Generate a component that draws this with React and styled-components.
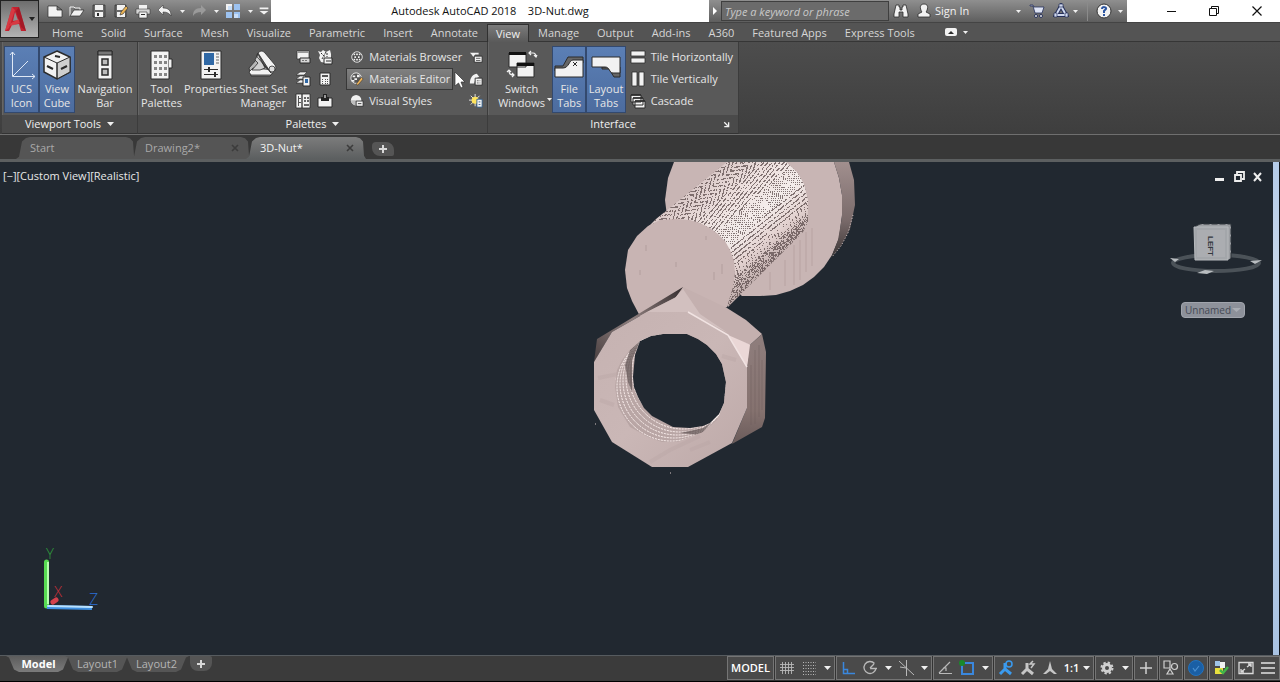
import React from 'react';
import styled, { createGlobalStyle, css } from 'styled-components';

const GlobalStyle = createGlobalStyle`
  * {
    box-sizing: border-box;
  }

  html, body, #root {
    height: 100%;
    margin: 0;
  }

  body {
    background: #212830;
    font-family: "Open Sans", "Noto Sans", sans-serif;
    font-size: 11px;
    line-height: 14px;
    color: #e6e6e6;
    overflow: hidden;
  }

  button, input {
    margin: 0;
    padding: 0;
    border: 0;
    background: none;
    font: inherit;
    color: inherit;
    white-space: nowrap;
  }

  svg {
    display: block;
    flex: none;
  }
`;

/* ---------- icons ---------- */

const W = '#f2f2f2';
const K = '#2b2b2b';

const glyphs = {
  newFile: <path d="M1 3h9l5 4v7H1z M10 3v4h5" fill={W} stroke={K} strokeWidth=".7" />,
  open: (
    <>
      <path d="M1 13V4h4l1 1h5v3" fill="#777" stroke={W} />
      <path d="M1 13l4-6h10l-4 6z" fill={W} stroke={K} strokeWidth=".7" />
    </>
  ),
  save: (
    <>
      <path d="M2 2h12v12H2z" fill="#6a6a6a" stroke={K} strokeWidth=".7" />
      <path d="M4 2h8v5H4zM4 9h8v5H4z" fill={W} />
      <path d="M6 10h2v3H6z" fill={K} />
    </>
  ),
  saveAs: (
    <>
      <path d="M2 2h11v12H2z" fill="#6a6a6a" stroke={K} strokeWidth=".7" />
      <path d="M4 2h8v5H4zM4 9h8v5H4z" fill={W} />
      <path d="M7 12l1-3 5-6 2 2-5 6z" fill="#e9b254" stroke={K} strokeWidth=".6" />
    </>
  ),
  print: (
    <>
      <path d="M4 2h8v4H4z" fill={W} />
      <path d="M1 6h14v5H1z" fill="#d4d4d4" stroke={K} strokeWidth=".5" />
      <path d="M4 9h8v6H4z" fill={W} stroke={K} strokeWidth=".6" />
      <path d="M6 11.500h4" stroke={K} />
    </>
  ),
  undo: <path d="M1 7l5-5v3c6 0 8 3 8 8-2-3-4-4-8-4v3z" fill={W} stroke={K} strokeWidth=".5" />,
  redo: <path d="M15 7l-5-5v3c-6 0-8 3-8 8 2-3 4-4 8-4v3z" fill="#9a9a9a" />,
  views: (
    <>
      <path d="M1 1h6v6H1z" fill={W} />
      <path d="M9 1h6v6H9zM1 9h6v6H1zM9 9h6v6H9z" fill="#9cc2f0" />
      <path d="M3 3h4v4H3zM9 11h4v4H9z" fill="#c9def7" />
    </>
  ),
  more: <path d="M3 4h10v2H3zM3 8h10l-5 4z" fill={W} />,
  binoculars: (
    <path d="M3 2h3v2h1v3h2V4h1V2h3l2 9v3h-5V9H6v5H1v-3z" fill={W} stroke={K} strokeWidth=".8" />
  ),
  person: (
    <path d="M8 1c6 0 3 7 2 8l4 2v3H2v-3l4-2C5 8 2 1 8 1z" fill={W} stroke={K} strokeWidth=".8" />
  ),
  cart: (
    <>
      <path d="M1 2h3l1 2h10l-2 6H6L4 3H1z" fill="#dde3f4" stroke="#26305a" strokeWidth=".8" />
      <circle cx="7" cy="13" r="1.500" fill={W} stroke="#26305a" />
      <circle cx="12" cy="13" r="1.500" fill={W} stroke="#26305a" />
    </>
  ),
  a360: (
    <>
      <path d="M8 3l5 9H3z" fill="none" stroke="#26305a" strokeWidth="4" />
      <path d="M8 3l5 9H3z" fill="none" stroke="#cfd8ee" strokeWidth="2" />
      <path d="M6 1h4v3H6zM1 10h3v4H1zM12 10h3v4h-3z" fill="#cfd8ee" stroke="#26305a" strokeWidth=".7" />
    </>
  ),
  help: (
    <>
      <circle cx="8" cy="8" r="7" fill={W} stroke="#333" />
      <path d="M6 6c0-3 5-2 4 0L8 8v2M8 11v2" fill="none" stroke="#2c55a0" strokeWidth="2" />
    </>
  ),
  minimize: <path d="M4 8.500h9" stroke="#111" />,
  restore: <path d="M3.500 5.500h7v7h-7zM5.500 5V3.500h7v7H11" fill="none" stroke="#111" />,
  close: <path d="M3.500 3.500l9 9M12.500 3.500l-9 9" stroke="#111" strokeWidth="1.200" />,

  ucs: (
    <g fill="none" stroke="#dfe8f5">
      <path d="M6.500 3v24.500H29M7 27L22 12" />
      <path d="M4 6l2.500-3L9 6M26 25l3 2.500-3 2.500" />
    </g>
  ),
  cube: (
    <g stroke={K}>
      <path d="M16 2l13 6v15l-13 7-13-7V8z" fill={W} strokeWidth="1.500" />
      <path d="M16 14l13-6v15l-13 7z" fill="#cfcfcf" />
      <path d="M3 8l13 6v16" fill="none" />
      <path d="M6 17l6 3M20 20l6-3M14 7l5 1" strokeWidth="2" />
    </g>
  ),
  navbar: (
    <g stroke={K}>
      <path d="M9 2h14v28H9z" fill={W} />
      <path d="M9 2h14v4H9z" fill="#777" />
      <path d="M13 10h6v6h-6zM13 20h6v6h-6z" fill="#bcbcbc" strokeWidth="1.500" />
    </g>
  ),
  toolPalettes: (
    <g>
      <path d="M6 2h18v28H6z" fill={W} stroke={K} />
      <path d="M24 10h3v9h-3" fill={W} stroke={K} />
      <path d="M9 6h3v3H9zM14 6h3v3h-3zM19 6h3v3h-3zM9 12h3v3H9zM14 12h3v3h-3zM19 12h3v3h-3zM9 18h3v3H9zM14 18h3v3h-3zM19 18h3v3h-3zM9 24h3v3H9zM14 24h3v3h-3zM19 24h3v3h-3z" fill="#858585" />
    </g>
  ),
  properties: (
    <g>
      <path d="M6 2h20v28H6z" fill={W} stroke={K} />
      <path d="M9 4h10v12H9z" fill="#2f68a5" />
      <path d="M21 5h3M21 8h3M21 11h3M21 14h3" stroke="#666" />
      <path d="M9 20.500h14M9 25.500h14" stroke={K} />
      <path d="M13 18h2v5h-2zM19 23h2v5h-2z" fill={K} />
    </g>
  ),
  sheetSet: (
    <g stroke={K} strokeWidth=".8" strokeLinejoin="round">
      <path d="M2 19l7-8 17 13-3 3H4z" fill="#b5b5b5" />
      <path d="M2 23l2 3h20l4-5-22-2z" fill={W} />
      <path d="M11 5l-3 6 3 3-6 7h8l5-2z" fill="#d0d0d0" />
      <path d="M11 4c3-3 5-2 7 0l10 12c2 3 0 8-4 8z" fill={W} />
      <path d="M11 4c-2 3-1 4 1 6l12 14" fill="none" />
      <circle cx="25" cy="20" r="3" fill="#dcdcdc" />
    </g>
  ),
  switchWindows: (
    <g>
      <path d="M3 4h17v14H3zM11 14h17v14H11z" fill={W} stroke={K} />
      <path d="M3 3h17v3H3zM11 14h17v3H11z" fill="#111" />
      <path d="M23 4h4c2 0 3 1 3 4M25 2l-2 2 2 2M28 6l2 2 1-2M3 21c0 4 1 5 5 5M6 24l2 2-2 2M1 23l2-2 2 2" fill="none" stroke={W} strokeWidth="1.200" />
    </g>
  ),
  fileTabs: (
    <g>
      <path d="M2 17h8l5-9h15v6h-6l-5 8H2z" fill="#666" stroke={K} />
      <path d="M2 19h8c6 0 6-8 10-8h10v17H2z" fill={W} stroke={K} />
      <path d="M20 13l4 4M24 13l-4 4" stroke={K} />
    </g>
  ),
  layoutTabs: (
    <g>
      <path d="M12 20h7l5 8h6V18H12z" fill="#666" stroke={K} />
      <path d="M2 8h28v16h-7c-4 0-3-6-8-6H2z" fill={W} stroke={K} />
    </g>
  ),

  command: (
    <>
      <path d="M2 2h12v8H2z" fill={W} stroke={K} strokeWidth=".7" />
      <path d="M2 2h12v2H2z" fill="#999" />
      <path d="M5 9h10v5H5z" fill="#d8d8d8" stroke={K} />
      <path d="M7 11.500h6" stroke="#777" strokeDasharray="2 1" />
    </>
  ),
  markup: (
    <>
      <path d="M1 2l3 1 2-2 3 2 4-2 1 4v5l-3 2-2 2-5-1-2-4 1-3z" fill={W} />
      <path d="M4 4l4 4M9 3l-4 7M10 4v4" stroke={K} strokeDasharray="2 1" />
      <path d="M7 9h8v6H7z" fill={W} stroke={K} />
      <path d="M9 12h5" stroke={K} />
    </>
  ),
  layers: (
    <>
      <path d="M1 12l4-3h6l-3 3zM1 8l4-3h6l-3 3zM1 4l4-3h7L9 4z" fill={W} stroke={K} strokeWidth=".6" />
      <path d="M8 6h7v9H8z" fill={W} stroke={K} />
      <path d="M10 8h3v4h-3z" fill="#2f68a5" />
    </>
  ),
  calculator: (
    <>
      <path d="M3 2h10v12H3z" fill={W} stroke={K} />
      <path d="M5 4h6v2H5zM5 8h1v1H5zM8 8h1v1H8zM10 8h1v1h-1zM5 10h1v1H5zM8 10h1v1H8zM10 10h1v1h-1zM5 12h1v1H5zM8 12h1v1H8zM10 12h1v1h-1z" fill="#555" />
    </>
  ),
  design: (
    <>
      <path d="M1 1h6v14H1zM7 1h8v14H7z" fill={W} stroke={K} strokeWidth=".8" />
      <path d="M3.500 3v10M3 5.500h3M3 9.500h3" stroke="#555" />
      <path d="M9 4h2v2H9zM12 4h2v2h-2zM9 7h2v2H9zM12 7h2v2h-2zM9 11h5v2H9z" fill="#666" />
    </>
  ),
  xref: (
    <>
      <path d="M1 5h14v9H1z" fill={W} stroke={K} />
      <path d="M4 4h8v4H4z" fill="#222" />
      <path d="M6 1h4v4H6z" fill="#222" />
      <path d="M7 2h2v3H7z" fill="#999" />
    </>
  ),
  browser: (
    <>
      <circle cx="8" cy="8" r="6" fill="#444" stroke={W} />
      <path d="M4 4h2v2H4zM7 4h2v2H7zM10 4h2v2h-2zM5 7h2v2H5zM9 7h2v2H9zM4 10h2v2H4zM7 10h2v2H7zM10 10h2v2h-2z" fill={W} />
    </>
  ),
  editor: (
    <>
      <circle cx="7" cy="7" r="6" fill="#555" stroke={W} />
      <path d="M3 4h3v2H3zM8 3h3v3H8zM5 7h3v2H5zM2 9h3v2H2z" fill={W} />
      <path d="M7 14l6-8 2 2-6 7z" fill="#f1b55a" stroke={K} strokeWidth=".6" />
    </>
  ),
  visual: (
    <>
      <circle cx="7" cy="7" r="6" fill={W} />
      <path d="M7 1v6H1a6 6 0 0 0 6 6z" fill="#bdbdbd" />
      <path d="M7 8h8v6H7z" fill={W} stroke={K} />
      <path d="M9 11h4" stroke={K} />
    </>
  ),
  lightList: (
    <>
      <path d="M1 3h10v2H7L5 8 3 5z" fill={W} />
      <path d="M6 7h9v7H6z" fill={W} stroke={K} />
      <path d="M8 9.500h5M8 12h5" stroke="#555" />
    </>
  ),
  camera: (
    <>
      <path d="M1 13c0-7 4-11 8-11l3 4c-4 0-5 3-6 7z" fill={W} />
      <path d="M7 7h8v8H7z" fill={W} stroke={K} />
      <path d="M9 10h4M9 12.500h4" stroke="#555" strokeDasharray="2 1" />
    </>
  ),
  sun: (
    <>
      <path d="M7 0v14M0 7h14M2 2l10 10M12 2L2 12" stroke={W} />
      <circle cx="7" cy="7" r="4" fill="#ffe45c" />
      <path d="M9 6h6v9H9z" fill={W} stroke="#2f5b8c" />
      <path d="M11 9h2M11 12h2" stroke="#2f5b8c" />
    </>
  ),
  tileH: <path d="M1 2h14v5H1zM1 9h14v5H1z" fill={W} stroke={K} strokeWidth=".8" />,
  tileV: <path d="M2 1h5v14H2zM9 1h5v14H9z" fill={W} stroke={K} strokeWidth=".8" />,
  cascade: (
    <g fill={W} stroke={K}>
      <path d="M1 2h10v7H1zM3 5h10v7H3zM5 8h10v7H5z" />
      <path d="M1 2h10M3 5h10M5 8h10" strokeWidth="1.500" />
    </g>
  ),
  launcher: <path d="M6 6l4 4M11 6v5H6" fill="none" stroke={W} strokeWidth="1.500" />,
  ribbonToggle: (
    <>
      <rect x="2" y="4" width="12" height="8" rx="2" fill={W} />
      <path d="M5 10l3-3 3 3z" fill={K} />
    </>
  ),

  grid: <path d="M3.500 2v12M6.500 2v12M9.500 2v12M12.500 2v12M1 4.500h14M1 7.500h14M1 10.500h14" stroke="#b9b9b9" strokeWidth=".9" />,
  snap: <path d="M2 2.500h13M2 5.500h13M2 8.500h13M2 11.500h13M2 14.500h13" stroke="#b9b9b9" strokeDasharray="1 1.500" />,
  ortho: <path d="M3.500 2v11.500H15M4 9.500h3.500V13" fill="none" stroke="#3a87dd" strokeWidth="1.500" />,
  polar: <path d="M12.500 3.500A6 6 0 1 0 14 8M8 8.500h7M8 8l4-4" fill="none" stroke="#b9b9b9" strokeWidth="1.300" />,
  iso: <path d="M8.500 0v16M1 1l15 14M2 7l6 1" stroke="#b9b9b9" />,
  track: <path d="M2 13.500h13M2 13L13 2M6 8h3v3" fill="none" stroke="#b9b9b9" strokeWidth="1.200" />,
  osnap: (
    <>
      <path d="M3 3h11v11H3z" fill="none" stroke="#3a87dd" strokeWidth="2" />
      <circle cx="3" cy="3" r="3" fill="#19892a" />
    </>
  ),
  annoOn: (
    <g fill="none" stroke="#3a9bf0">
      <path d="M7 3v7M7 9l-5 5M7 9l6 5" strokeWidth="3" />
      <circle cx="11" cy="4" r="3" strokeWidth="1.500" />
    </g>
  ),
  annoAuto: (
    <g fill="none" stroke="#c6c6c6">
      <path d="M7 3v7M7 9l-5 5M7 9l6 5" strokeWidth="3" />
      <path d="M13 1l-3 3h4l-3 4" strokeWidth="1.500" />
    </g>
  ),
  anno: <path d="M8 1l2 8 5 5h-3l-4-3-4 3H1l5-5z" fill="#c6c6c6" />,
  gear: (
    <>
      <circle cx="8" cy="8" r="3.500" fill="none" stroke="#d0d0d0" strokeWidth="3" />
      <circle cx="8" cy="8" r="5.500" fill="none" stroke="#d0d0d0" strokeWidth="2" strokeDasharray="2.320 2" />
    </>
  ),
  plus: <path d="M8 2v12M2 8h12" stroke="#d0d0d0" strokeWidth="1.500" />,
  isolate: (
    <g fill="#4a4a4a" stroke="#d0d0d0" strokeWidth="1.200">
      <path d="M1 1h6v7H1z" />
      <circle cx="11.500" cy="6.500" r="3" />
      <path d="M7 9l3 5H4z" />
    </g>
  ),
  hardware: (
    <>
      <circle cx="8" cy="8" r="7.500" fill="#1a5fa5" stroke="#2272be" />
      <path d="M5 8l2 3 4-5" fill="none" stroke="#4b8fd0" strokeWidth="1.200" />
    </>
  ),
  trusted: (
    <>
      <path d="M2 1h5v5H2z" fill="#9fc5e8" />
      <path d="M7 2h5v6H7z" fill={W} />
      <path d="M2 8h8v6H2z" fill="#e8df3e" />
      <path d="M7 10l3 3 5-6" fill="none" stroke="#43b649" strokeWidth="2.500" />
    </>
  ),
  clean: (
    <g fill="none" stroke="#dadada" strokeWidth="1.300">
      <path d="M1 2.500h14v11H1z" />
      <path d="M9 7l4-3M10 4h3v3M7 9l-4 3M3 9v3h3" />
    </g>
  ),
  menu: <path d="M1 3h14M1 8h14M1 13h14" stroke="#e2e2e2" strokeWidth="1.600" />,
};

const Icon = ({ name, size = 16, box = 16 }) => (
  <svg width={size} height={size} viewBox={`0 0 ${box} ${box}`} aria-hidden="true">
    {glyphs[name]}
  </svg>
);

const Caret = () => (
  <svg width="7" height="4" viewBox="0 0 7 4" aria-hidden="true">
    <path d="M0 0h7L3.500 4z" fill="#f0f0f0" />
  </svg>
);

const TinyCaret = () => (
  <svg width="5" height="3" viewBox="0 0 5 3" aria-hidden="true">
    <path d="M0 0h5L2.500 3z" fill="#f0f0f0" />
  </svg>
);

const Cross = () => (
  <svg width="8" height="14" viewBox="0 0 8 14" aria-hidden="true">
    <path d="M1 4l6 6M7 4l-6 6" stroke="#3c3c3c" strokeWidth="1.600" />
  </svg>
);

const PlusMark = () => (
  <svg width="8" height="8" viewBox="0 0 8 8" aria-hidden="true">
    <path d="M4 0v8M0 4h8" stroke="#d8d8d8" strokeWidth="2" />
  </svg>
);

/* ---------- layout ---------- */

const Shell = styled.div`
  display: flex;
  flex-direction: column;
  height: 100vh;
  background: #3b3b3b;
  border-bottom: 1px solid #000;
`;

const Header = styled.header`
  display: grid;
  grid-template-columns: 39px 1fr;
  grid-template-rows: 23px 18px;
  background: #545454;
  border-bottom: 1px solid #363636;
`;

const AppButton = styled.button`
  grid-row: 1 / 3;
  height: 38px;
  display: flex;
  align-items: center;
  padding-left: 3px;
  gap: 2px;
  background: linear-gradient(#6d6d6d, #b3b3b3);
  border: 1px solid #222;
`;

const TitleBar = styled.div`
  display: flex;
  background: #fff;
  border-bottom: 1px solid #444;
`;

const QuickAccess = styled.div`
  display: flex;
  align-items: center;
  padding: 0 0 0 5px;
  background: linear-gradient(#8f8f8f, #5e5e5e);
`;

const ToolButton = styled.button`
  display: flex;
  align-items: center;
  justify-content: center;
  align-self: ${props => props.$low ? 'flex-end' : 'auto'};
  width: ${props => props.$w || 22}px;
  height: ${props => props.$h || 22}px;
`;

const Title = styled.h1`
  flex: 1;
  margin: 0;
  font-size: 11px;
  font-weight: 400;
  line-height: 22px;
  text-align: center;
  white-space: pre;
  color: #111;
`;

const InfoCenter = styled.div`
  display: flex;
  align-items: center;
  width: 418px;
  background: linear-gradient(#8f8f8f, #5e5e5e);
`;

const SearchBox = styled.input`
  width: 168px;
  height: 20px;
  padding: 0 3px;
  background: #6b6b6b;
  border: 1px solid #3f3f3f;
  font-style: italic;
  outline: none;

  &::placeholder {
    color: #c9c9c9;
    opacity: 1;
  }
`;

const SignIn = styled.button`
  display: flex;
  align-items: center;
  justify-content: space-between;
  width: 86px;
  height: 22px;
  color: #f2f2f2;
`;

const Divider = styled.span`
  width: 1px;
  height: 20px;
  margin: 0 6px;
  background: #8b8b8b;
`;

const WindowControls = styled.div`
  display: flex;
  justify-content: space-between;
  width: 153px;
  padding: 0 12px 0 33px;
`;

const Menu = styled.nav`
  display: flex;
  align-items: flex-end;
  padding-left: 4px;
`;

const MenuTab = styled.button`
  height: 18px;
  padding: 0 8px;
  border: 1px solid transparent;
  border-bottom: 0;
  color: #d6d6d6;

  ${props => props.$active && css`
    margin-bottom: -1px;
    border-color: #303030;
    color: #f0f0f0;
    background: linear-gradient(#7b7b7b, #5a5a5a);
  `}
`;

const RibbonToggle = styled.button`
  display: flex;
  align-items: center;
  gap: 4px;
  margin-left: 19px;
  height: 18px;
`;

const Ribbon = styled.section`
  position: relative;
  display: flex;
  height: 93px;
  padding-left: 2px;
  background: linear-gradient(#4d4d4d, #3e3e3e);
  border-bottom: 1px solid #6f6f6f;
`;

const Panel = styled.div`
  display: flex;
  flex-direction: column;
  width: ${props => props.$w}px;
  background: #595959;
  border-right: 1px solid #3c3c3c;
  border-bottom: 1px solid #333;
  box-shadow: inset 1px 0 0 #666;
`;

const PanelBody = styled.div`
  display: flex;
  flex: 1;
  padding: ${props => props.$wide ? '4px 2px 0 9px' : '4px 2px 0'};
`;

const PanelTitle = styled.button`
  display: flex;
  align-items: center;
  justify-content: center;
  gap: 6px;
  height: 18px;
  background: #4a4a4a;
  color: #f0f0f0;
`;

const InterfaceFooter = styled.div`
  display: grid;
  grid-template-columns: 24px 1fr 16px;
  align-items: center;
  height: 18px;
  padding-right: 8px;
  padding-left: 0;
  background: #4a4a4a;
  color: #f0f0f0;
  text-align: center;
`;

const LargeButton = styled.button`
  display: flex;
  flex-direction: column;
  align-items: center;
  width: ${props => props.$w}px;
  height: 67px;
  padding-top: 2px;
  gap: 1px;
  white-space: pre;
  border: 1px solid transparent;

  ${props => props.$active && css`
    background: linear-gradient(#5b7fb5, #4c6c9f);
    border-color: #33496e;
  `}
`;

const IconGrid = styled.div`
  display: grid;
  grid-template-columns: 22px 22px;
  grid-template-rows: repeat(3, 22px);
  padding-left: 4px;
`;

const Stack = styled.div`
  display: flex;
  flex-direction: column;
  align-items: flex-start;
`;

const PanelDivider = styled.span`
  width: 1px;
  height: 67px;
  margin: 0 6px 0 4px;
  background: #7a7a7a;
`;

const SmallButton = styled.button`
  display: flex;
  align-items: center;
  gap: 5px;
  height: 22px;
  padding: 0 2px 0 3px;
  border: 1px solid transparent;

  ${props => props.$hover && css`
    background: linear-gradient(#808080, #686868);
    border-color: #383838;
  `}
`;

const Pointer = styled.svg`
  position: absolute;
  left: 454px;
  top: 29px;
`;

const FileTabs = styled.div`
  display: flex;
  align-items: flex-end;
  height: 27px;
  padding-left: 16px;
  background: #383838;
  border-bottom: 3px solid #5c5f60;
`;

const FileTab = styled.div`
  display: flex;
  align-items: center;
  justify-content: space-between;
  width: 120px;
  height: 22px;
  margin-right: -5px;
  padding: 0 12px 0 14px;
  color: ${props => props.$active ? '#f2f2f2' : '#a9a9a9'};
  background: ${props => props.$active ? 'linear-gradient(#7c7c7c, #5c5f60)' : '#555'};
  clip-path: polygon(0 100%, 3px 90%, 6px 20%, 10px 4%, 14px 0, calc(100% - 10px) 0, calc(100% - 6px) 6%, calc(100% - 3px) 20%, calc(100% - 2px) 85%, 100% 100%);
`;

const TabClose = styled.button`
  width: 8px;
  height: 14px;
`;

const AddTab = styled.button`
  display: flex;
  align-items: center;
  justify-content: center;
  width: 22px;
  height: ${props => props.$bottom ? 15 : 14}px;
  margin: ${props => props.$bottom ? '0 0 0 7px' : '0 0 3px 11px'};
  background: #555;
  border-radius: ${props => props.$bottom ? '0 2px 8px 8px' : '4px 8px 2px 8px'};
`;

const Viewport = styled.main`
  position: relative;
  flex: 1;
  min-height: 0;
  overflow: hidden;
  background: #212830;
  border-right: 1px solid #10151a;
`;

const ViewportBar = styled.div`
  display: flex;
  justify-content: space-between;
  padding: 6px 13px 0 3px;
`;

const ViewportControls = styled.div`
  display: flex;
`;

const ViewControl = styled.button`
  display: block;
  width: ${props => props.$w ? `${props.$w}px` : 'auto'};
  color: #e8e8e8;
`;

const BackWindow = styled.div`
  position: absolute;
  top: 0;
  right: 0;
  bottom: 0;
  width: 6px;
  background: linear-gradient(#b4cbe8, #c6d6ea 20%, #a9c3e3);
`;

const Model = styled.svg`
  position: absolute;
  left: 580px;
  top: 0;
`;

const UcsTriad = styled.svg`
  position: absolute;
  left: 36px;
  bottom: 40px;
`;

const ViewCube = styled.div`
  position: absolute;
  top: 54px;
  right: 15px;
  display: flex;
  flex-direction: column;
  align-items: center;
  gap: 18px;
`;

const WcsMenu = styled.button`
  display: flex;
  align-items: center;
  justify-content: space-between;
  width: 64px;
  height: 16px;
  margin-right: 6px;
  padding: 0 3px;
  font-size: 10px;
  color: #454a55;
  background: #8d919a;
  border: 1px solid #a1a5ad;
  border-radius: 4px;
`;

const Footer = styled.footer`
  display: flex;
  justify-content: space-between;
  height: 26px;
  background: #3b3b3b;
  border-top: 1px solid #565b5f;
`;

const LayoutTabs = styled.div`
  display: flex;
  padding-left: 6px;
`;

const LayoutTab = styled.button`
  width: 65px;
  height: 16px;
  margin-right: -6px;
  color: ${props => props.$active ? '#fff' : '#b4b4b4'};
  font-weight: ${props => props.$active ? 700 : 400};
  background: ${props => props.$active ? 'linear-gradient(#5c5c5c, #7b7b7b)' : '#555'};
  clip-path: polygon(0 0, 3px 10%, 8px 85%, 13px 100%, calc(100% - 13px) 100%, calc(100% - 8px) 85%, calc(100% - 3px) 10%, 100% 0);
`;

const StatusBar = styled.div`
  display: flex;
  background: #333;
  gap: 1px;
`;

const StatusGroup = styled.div`
  display: flex;
  align-items: center;
  height: 24px;
  background: #4a4a4a;
  border: 1px solid #757575;
`;

const StatusButton = styled.button`
  display: flex;
  align-items: center;
  justify-content: center;
  gap: 4px;
  width: ${props => props.$w || 22}px;
  height: 22px;
  color: #fff;
  font-weight: 600;
`;

/* ---------- 3D model ---------- */

// Pixel moire of the thread, v runs across the shaft and u along it
const threadPath = () => {
  let d = '';
  for (let y = 162; y < 310; y += 1) {
    for (let x = 640; x < 812; x += 1) {
      const v = (x - 648) * 0.66 + (y - 227) * 0.75;
      const u = (x - 648) * 0.75 - (y - 227) * 0.66;
      const noise = Math.abs(Math.sin(x * 12.9898 + y * 78.233) * 43758.5453) % 1;
      let dark = false;
      if (v < 26) {
        const fold = Math.abs(((v + 2) % 14) - 7);
        dark = Math.sin((u + fold * 1.5) * 1.05) > 0.25 && noise > 0.3;
      } else if (v < 48) {
        dark = Math.sin((v + u * 0.16) * 2) > 0.35 && noise > 0.3;
      } else if (v < 68) {
        dark = Math.sin(v * 2.3) * Math.sin(u * 1.9) > 0.3 && noise > 0.25;
      } else if (v < 86) {
        dark = Math.sin((v - u * 0.05) * 1.7) > 0.4 && noise > 0.3;
      } else if (v < 95) {
        dark = (u < 38 || noise > 0.6) && Math.sin((u + v * 0.5) * 1.6) > 0.2;
      } else {
        dark = noise > 0.5;
      }
      if (dark) d += `M${x} ${y}h1v1h-1z`;
    }
  }
  return d;
};

const thread = threadPath();

const boreRings = [0, 3, 6, 9, 12, 15];

const NutAndBolt = () => (
  <Model width="300" height="320" viewBox="580 162 300 320" role="img" aria-label="Hex nut and bolt">
    <defs>
      <linearGradient id="face" x1="0" y1="0" x2="1" y2="1">
        <stop offset="0" stopColor="#c5b2b1" />
        <stop offset=".5" stopColor="#cab7b6" />
        <stop offset="1" stopColor="#bda9a8" />
      </linearGradient>
      <linearGradient id="rim" x1="0" y1="0" x2="0" y2="1">
        <stop offset="0" stopColor="#a18f8e" />
        <stop offset=".6" stopColor="#7a6b6b" />
        <stop offset="1" stopColor="#3b3535" />
      </linearGradient>
      <linearGradient id="side" x1="0" y1="0" x2="0" y2="1">
        <stop offset="0" stopColor="#8f7e7d" />
        <stop offset=".7" stopColor="#85726f" />
        <stop offset="1" stopColor="#6a5b5a" />
      </linearGradient>
      <linearGradient id="shadowSide" x1="0" y1="1" x2="1" y2="0">
        <stop offset="0" stopColor="#493f40" />
        <stop offset=".5" stopColor="#8f7f7e" />
        <stop offset="1" stopColor="#332c2d" />
      </linearGradient>
      <linearGradient id="shaft" gradientUnits="userSpaceOnUse" x1="672" y1="190" x2="755" y2="285">
        <stop offset="0" stopColor="#d3c1c0" />
        <stop offset=".35" stopColor="#ecdfdd" />
        <stop offset=".6" stopColor="#f4edeb" />
        <stop offset=".8" stopColor="#e2d1cf" />
        <stop offset="1" stopColor="#b9a7a6" />
      </linearGradient>
      <clipPath id="shaftClip">
        <path d="M646 229L656 219L727 162H786L797 172L804 184L808 200V222L803 232L790 245L728 307L700 250z" />
      </clipPath>
      <clipPath id="boreClip">
        <path d="M640 341L651 336L663 334L687 334L698 339L707 345L716 354L722 364L726 382L724 403L717 420L703 432L677 442L662 442L648 437L630 427L618 407L615 387L617 370L622 360L630 350z" />
      </clipPath>
    </defs>

    <path d="M674 162L668 178L665 200L670 240L742 296L760 296L776 295L790 291L803 285L814 277L824 267L832 255L839 238L842 215L842 195L839 178L834 162z" fill="#c8b5b4" />
    <path d="M800 240v40M794 245v40M806 232v40M812 228v38M785 260v26M770 272v18" stroke="#c0acab" strokeWidth="2" />
    <path d="M834 162h15l5 18 1 25-5 24-9 17-10 12 7-18 4-23V195l-3-17z" fill="url(#rim)" />
    <path d="M853 215l-5 18-7 13-9 11" fill="none" stroke="#d8c8c7" strokeDasharray="1 2" />

    <g clipPath="url(#shaftClip)">
      <path d="M640 162h172v148H640z" fill="url(#shaft)" />
      <path d={thread} fill="#5d4e4e" opacity=".75" shapeRendering="crispEdges" />
    </g>

    <path d="M637 236L648 226L660 220L676 219L690 220L700 223L710 228L718 234L725 241L730 250L734 261L735 273L733 287L727 307L700 320H642L632 301L627 288L625 270L628 250z" fill="#c8b4b3" />
    <path d="M646 245v6M676 262v5M706 236v4M722 264v10M714 272v8M640 270v5" stroke="#bda9a8" strokeWidth="2" />

    <path d="M683 287L597 339L594 362L612 332L647 312L676 297z" fill="url(#shadowSide)" />
    <path d="M683 287L727 308L746 320L762 334L750 345L728 337L688 312z" fill="#c4b0af" />
    <path d="M675 298L683 289L700 314L728 333L688 312H647z" fill="#d2c0bf" />
    <path d="M728 335L751 345L747 370z" fill="#ead7d6" />
    <path d="M762 334L766 352L765 418L762 427L732 444L747 408V368L750 345z" fill="url(#side)" />
    <path d="M751 365v60M755 350v74M759 345v72M762 360v50" stroke="#6a5a59" strokeWidth="2" opacity=".2" />
    <path d="M647 312H688L728 335L747 367V408L732 443L688 467H652L612 442L594 410V362L612 332z" fill="url(#face)" />
    <path d="M688 312L728 335L747 367" fill="none" stroke="#f1e3e2" strokeWidth="1.500" />
    <path d="M598 378l20-4 10 4M600 400l14 5M650 462l20-12 30-14M690 450l20-8M722 356l14 4" fill="none" stroke="#b7a3a2" strokeWidth="4" opacity=".35" />

    <g clipPath="url(#boreClip)">
      <path d="M610 330h120v116H610z" fill="#b9a6a5" />
      {boreRings.map(r => (
        <ellipse key={r} cx={671 + r} cy={387 - r} rx="54" ry="54" fill="none" stroke="#fff3f1" strokeDasharray="2 1" />
      ))}
      <path d="M640 341L630 350L625 365L628 382L632 392L632 360z" fill="#5d5050" opacity=".7" />
      <path d="M680 433L703 428L712 422L700 435z" fill="#5d5050" opacity=".7" />
      <path d="M640 341L651 336L663 334L687 334L698 339L707 345L716 354L722 364L726 382L724 403L719 414L710 423L703 426L690 428L673 427L652 416L644 408L638 397L634 387L633 377L635 355z" fill="#212830" />
    </g>
    <path d="M615 379h1M670 473h1M595 424h1" stroke="#d9c9c8" />
  </Model>
);

/* ---------- data ---------- */

const quickTools = [
  ['newFile', 'New'], ['open', 'Open'], ['save', 'Save'], ['saveAs', 'Save As'], ['print', 'Plot'],
];

const menus = [
  'Home', 'Solid', 'Surface', 'Mesh', 'Visualize', 'Parametric', 'Insert', 'Annotate', 'View',
  'Manage', 'Output', 'Add-ins', 'A360', 'Featured Apps', 'Express Tools',
];

const paletteTools = [
  ['command', 'Command Line'], ['markup', 'Markup Set Manager'],
  ['layers', 'Layer Properties'], ['calculator', 'Quick Calculator'],
  ['design', 'Design Center'], ['xref', 'External References'],
];

const materialTools = [
  ['browser', 'Materials Browser'], ['editor', 'Materials Editor'], ['visual', 'Visual Styles'],
];

const lightTools = [
  ['lightList', 'Lights in Model'], ['camera', 'Advanced Render Settings'], ['sun', 'Sun Properties'],
];

const windowTools = [
  ['tileH', 'Tile Horizontally'], ['tileV', 'Tile Vertically'], ['cascade', 'Cascade'],
];

const Large = ({ icon, children, ...rest }) => (
  <LargeButton {...rest}>
    <Icon name={icon} size={32} box={32} />
    <span>{children}</span>
  </LargeButton>
);

const Drop = ({ label, ...rest }) => (
  <ToolButton $w={12} aria-label={label} {...rest}><TinyCaret /></ToolButton>
);

const Status = ({ icon, label }) => (
  <StatusButton aria-label={label}><Icon name={icon} /></StatusButton>
);

const StatusDrop = ({ label }) => (
  <StatusButton $w={14} aria-label={label}><Caret /></StatusButton>
);

const App = () => (
  <Shell>
    <GlobalStyle />
    <Header>
      <AppButton aria-label="Application menu">
        <svg width="23" height="26" viewBox="0 0 23 26">
          <path d="M8 1h7l7 24h-5l-2-7-7 1-3 6H1z" fill="#c3202e" />
          <path d="M11 6l3 8-5 1z" fill="#8f8f8f" />
          <path d="M8 1L1 25l4-3L11 4zM5 18l10-5 1 4-9 3z" fill="#e0454c" opacity=".7" />
          <path d="M12 5l5 16 5 4-7-24z" fill="#8f1420" opacity=".6" />
        </svg>
        <svg width="6" height="4" viewBox="0 0 6 4"><path d="M0 0h6L3 4z" fill="#222" /></svg>
      </AppButton>
      <TitleBar>
        <QuickAccess>
          {quickTools.map(([icon, label]) => (
            <ToolButton key={icon} aria-label={label}><Icon name={icon} /></ToolButton>
          ))}
          <ToolButton aria-label="Undo"><Icon name="undo" /></ToolButton>
          <Drop label="Undo history" />
          <ToolButton aria-label="Redo"><Icon name="redo" /></ToolButton>
          <Drop label="Redo history" />
          <ToolButton aria-label="Viewport configuration"><Icon name="views" /></ToolButton>
          <Drop label="Viewport list" />
          <ToolButton $w={15} aria-label="Customize"><Icon name="more" size={14} /></ToolButton>
        </QuickAccess>
        <Title>Autodesk AutoCAD 2018    3D-Nut.dwg</Title>
        <InfoCenter>
          <ToolButton $w={12} aria-label="Collapse search">
            <svg width="4" height="8" viewBox="0 0 4 8"><path d="M0 0v8l4-4z" fill="#fff" /></svg>
          </ToolButton>
          <SearchBox aria-label="Search" placeholder="Type a keyword or phrase" />
          <ToolButton $w={24} aria-label="Find"><Icon name="binoculars" /></ToolButton>
          <ToolButton aria-label="Account"><Icon name="person" /></ToolButton>
          <SignIn>Sign In<TinyCaret /></SignIn>
          <ToolButton $w={32} aria-label="App Store"><Icon name="cart" /></ToolButton>
          <ToolButton $w={16} aria-label="Stay Connected"><Icon name="a360" /></ToolButton>
          <Drop label="Connect menu" />
          <Divider />
          <ToolButton $w={20} aria-label="Help"><Icon name="help" /></ToolButton>
          <Drop label="Help menu" />
        </InfoCenter>
        <WindowControls>
          <ToolButton aria-label="Minimize"><Icon name="minimize" /></ToolButton>
          <ToolButton aria-label="Restore"><Icon name="restore" /></ToolButton>
          <ToolButton aria-label="Close"><Icon name="close" /></ToolButton>
        </WindowControls>
      </TitleBar>
      <Menu>
        {menus.map(name => (
          <MenuTab key={name} $active={name === 'View'}>{name}</MenuTab>
        ))}
        <RibbonToggle aria-label="Minimize ribbon">
          <Icon name="ribbonToggle" />
          <TinyCaret />
        </RibbonToggle>
      </Menu>
    </Header>

    <Ribbon>
      <Panel $w={136}>
        <PanelBody>
          <Large icon="ucs" $w={35} $active>{'UCS\nIcon'}</Large>
          <Large icon="cube" $w={36} $active>{'View\nCube'}</Large>
          <Large icon="navbar" $w={60}>{'Navigation\nBar'}</Large>
        </PanelBody>
        <PanelTitle>Viewport Tools <Caret /></PanelTitle>
      </Panel>
      <Panel $w={350}>
        <PanelBody>
          <Large icon="toolPalettes" $w={43}>{'Tool\nPalettes'}</Large>
          <Large icon="properties" $w={56}>Properties</Large>
          <Large icon="sheetSet" $w={52}>{'Sheet Set\nManager'}</Large>
          <IconGrid>
            {paletteTools.map(([icon, label]) => (
              <ToolButton key={icon} aria-label={label}><Icon name={icon} /></ToolButton>
            ))}
          </IconGrid>
          <PanelDivider />
          <Stack>
            {materialTools.map(([icon, label]) => (
              <SmallButton key={icon} $hover={icon === 'editor'}><Icon name={icon} size={14} />{label}</SmallButton>
            ))}
          </Stack>
          <Stack>
            {lightTools.map(([icon, label]) => (
              <ToolButton key={icon} aria-label={label}><Icon name={icon} size={14} /></ToolButton>
            ))}
          </Stack>
        </PanelBody>
        <PanelTitle>Palettes <Caret /></PanelTitle>
      </Panel>
      <Panel $w={251}>
        <PanelBody $wide>
          <Large icon="switchWindows" $w={50}>{'Switch\nWindows'}</Large>
          <Drop label="Window list" $w={6} $h={32} $low />
          <Large icon="fileTabs" $w={35} $active>{'File\nTabs'}</Large>
          <Large icon="layoutTabs" $w={40} $active>{'Layout\nTabs'}</Large>
          <Stack>
            {windowTools.map(([icon, label]) => (
              <SmallButton key={icon}><Icon name={icon} />{label}</SmallButton>
            ))}
          </Stack>
        </PanelBody>
        <InterfaceFooter>
          <span />
          Interface
          <ToolButton $w={24} $h={18} aria-label="Interface options"><Icon name="launcher" size={14} /></ToolButton>
        </InterfaceFooter>
      </Panel>
      <Pointer width="12" height="18" viewBox="0 0 12 18" aria-hidden="true">
        <path d="M1 1v14l3.500-3 2.500 5 2-1-2-5h4z" fill="#fff" stroke="#333" strokeWidth=".7" />
      </Pointer>
    </Ribbon>

    <FileTabs>
      <FileTab>Start</FileTab>
      <FileTab>Drawing2* <TabClose aria-label="Close Drawing2"><Cross /></TabClose></FileTab>
      <FileTab $active>3D-Nut* <TabClose aria-label="Close 3D-Nut"><Cross /></TabClose></FileTab>
      <AddTab aria-label="New drawing"><PlusMark /></AddTab>
    </FileTabs>

    <Viewport>
      <NutAndBolt />
      <BackWindow />
      <ViewportBar>
        <ViewportControls>
          <ViewControl>[−]</ViewControl>
          <ViewControl>[Custom View]</ViewControl>
          <ViewControl>[Realistic]</ViewControl>
        </ViewportControls>
        <ViewportControls>
          <ViewControl $w={19} aria-label="Minimize viewport"><svg width="12" height="16" viewBox="0 0 12 16"><path d="M1 10h9v3H1z" fill="#eee" /></svg></ViewControl>
          <ViewControl $w={19} aria-label="Restore viewport"><svg width="12" height="16" viewBox="0 0 12 16"><path d="M2 7h6v6H2zM4 6V4h7v7H9" fill="none" stroke="#eee" strokeWidth="1.800" /></svg></ViewControl>
          <ViewControl $w={14} aria-label="Close viewport"><svg width="12" height="16" viewBox="0 0 12 16"><path d="M2 5l7 8M9 5l-7 8" stroke="#eee" strokeWidth="2" /></svg></ViewControl>
        </ViewportControls>
      </ViewportBar>
      <ViewCube>
        <svg width="96" height="68" viewBox="1168 216 96 68" role="img" aria-label="View cube">
          <ellipse cx="1216" cy="263" rx="43" ry="8" fill="none" stroke="#4b5258" strokeWidth="4" />
          <path d="M1170 258l9 1-4 3zM1262 260l-12 1 5 3zM1197 273l8-3 9 1-7 3z" fill="#b9bdc0" />
          <path d="M1196 226l4-2h31v34l-3 2z" fill="#9a9da1" stroke="#2f353b" strokeDasharray="6 2" />
          <path d="M1194 227h34v33h-33z" fill="#a3a6aa" stroke="#b7babd" />
          <path d="M1197 230h28v27h-28z" fill="#b0b3b6" opacity=".6" />
          <text transform="translate(1208 236) rotate(90)" fontSize="8" fontWeight="700" fill="#33383e" fontFamily="Liberation Sans, sans-serif">LEFT</text>
        </svg>
        <WcsMenu>Unnamed <svg width="9" height="4" viewBox="0 0 9 4"><path d="M0 0h9L4.500 4z" fill="#a9adb4" /></svg></WcsMenu>
      </ViewCube>
      <UcsTriad width="72" height="80" viewBox="36 535 72 80" role="img" aria-label="UCS axes">
        <path d="M53 602l3-2" stroke="#d4414c" strokeWidth="5" strokeLinecap="round" />
        <path d="M46.500 562v44" stroke="#58db52" strokeWidth="5" strokeLinecap="round" />
        <path d="M48 562v42" stroke="#b5ffae" strokeWidth="2" />
        <path d="M47 607l45 1" stroke="#3f8fe0" strokeWidth="4" />
        <path d="M48 606l44 1" stroke="#b9e2ff" strokeWidth="2" strokeLinecap="round" />
        <text x="46" y="559" fontSize="15" fontWeight="300" fill="#2f9a3d">Y</text>
        <text x="54" y="597" fontSize="15" fontWeight="300" fill="#c9303b">X</text>
        <text x="89" y="605" fontSize="16" fontWeight="300" fill="#2a6fd6">Z</text>
      </UcsTriad>
    </Viewport>

    <Footer>
      <LayoutTabs>
        <LayoutTab $active>Model</LayoutTab>
        <LayoutTab>Layout1</LayoutTab>
        <LayoutTab>Layout2</LayoutTab>
        <AddTab $bottom aria-label="New layout"><PlusMark /></AddTab>
      </LayoutTabs>
      <StatusBar>
        <StatusGroup><StatusButton $w={45}>MODEL</StatusButton></StatusGroup>
        <StatusGroup>
          <Status icon="grid" label="Grid" />
          <Status icon="snap" label="Snap" />
          <StatusDrop label="Snap options" />
        </StatusGroup>
        <StatusGroup>
          <Status icon="ortho" label="Ortho" />
          <Status icon="polar" label="Polar tracking" />
          <StatusDrop label="Polar options" />
          <Status icon="iso" label="Isometric drafting" />
          <StatusDrop label="Isometric options" />
        </StatusGroup>
        <StatusGroup>
          <Status icon="track" label="Object snap tracking" />
          <Status icon="osnap" label="Object snap" />
          <StatusDrop label="Object snap options" />
        </StatusGroup>
        <StatusGroup>
          <Status icon="annoOn" label="Annotation visibility" />
          <Status icon="annoAuto" label="Auto scale" />
          <Status icon="anno" label="Annotation scale" />
          <StatusButton $w={32}>1:1 <Caret /></StatusButton>
        </StatusGroup>
        <StatusGroup>
          <Status icon="gear" label="Workspace" />
          <StatusDrop label="Workspace options" />
        </StatusGroup>
        <StatusGroup><Status icon="plus" label="Annotation monitor" /></StatusGroup>
        <StatusGroup><Status icon="isolate" label="Isolate objects" /></StatusGroup>
        <StatusGroup><Status icon="hardware" label="Hardware acceleration" /></StatusGroup>
        <StatusGroup><Status icon="trusted" label="Trusted autodesk DWG" /></StatusGroup>
        <StatusGroup>
          <Status icon="clean" label="Clean screen" />
          <Status icon="menu" label="Customization" />
        </StatusGroup>
      </StatusBar>
    </Footer>
  </Shell>
);

export default App;
